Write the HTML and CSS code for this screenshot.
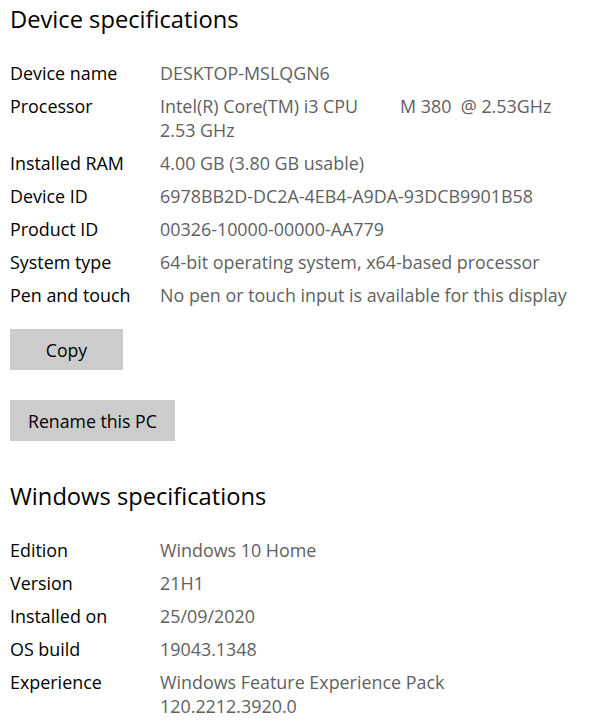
FILE: index.html
```html
<!DOCTYPE html>
<html lang="en">
<head>
    <meta charset="UTF-8">
    <title>About</title>
    <link rel="stylesheet" href="styles.css">
</head>
<body>
    <main class="about">
        <section class="block">
            <h2 class="title">Device specifications</h2>
            <div class="specs">
                <span class="label">Device name</span>
                <span class="value">DESKTOP-MSLQGN6</span>
                <span class="label">Processor</span>
                <span class="value">Intel(R) Core(TM) i3 CPU         M 380  @ 2.53GHz   2.53 GHz</span>
                <span class="label">Installed RAM</span>
                <span class="value">4.00 GB (3.80 GB usable)</span>
                <span class="label">Device ID</span>
                <span class="value">6978BB2D-DC2A-4EB4-A9DA-93DCB9901B58</span>
                <span class="label">Product ID</span>
                <span class="value">00326-10000-00000-AA779</span>
                <span class="label">System type</span>
                <span class="value">64-bit operating system, x64-based processor</span>
                <span class="label">Pen and touch</span>
                <span class="value">No pen or touch input is available for this display</span>
            </div>
            <div class="actions">
                <button class="btn">Copy</button>
                <button class="btn">Rename this PC</button>
            </div>
        </section>
        <section class="block">
            <h2 class="title">Windows specifications</h2>
            <div class="specs">
                <span class="label">Edition</span>
                <span class="value">Windows 10 Home</span>
                <span class="label">Version</span>
                <span class="value">21H1</span>
                <span class="label">Installed on</span>
                <span class="value">25/09/2020</span>
                <span class="label">OS build</span>
                <span class="value">19043.1348</span>
                <span class="label">Experience</span>
                <span class="value">Windows Feature Experience Pack 120.2212.3920.0</span>
            </div>
        </section>
    </main>
</body>
</html>
```
FILE: styles.css
```css
*{
    margin:0;
    padding:0;
    box-sizing:border-box;
}
body{
    background-color:#fff;
    font-family:"Open Sans","Noto Sans",sans-serif;
    color:#000;
}
.about{
    padding:3px 10px 0 10px;
}
.title{
    font-size:23.7px;
    font-weight:400;
    line-height:32px;
    margin-bottom:26px;
}
.specs{
    display:grid;
    grid-template-columns:150px 415px;
    row-gap:9px;
    font-size:17.9px;
    line-height:24px;
}
.value{
    color:#5f5f5f;
    white-space:pre-wrap;
}
.actions{
    display:flex;
    flex-direction:column;
    align-items:flex-start;
    gap:30px;
    margin-top:22px;
    margin-bottom:39px;
}
.btn{
    height:41px;
    min-width:113px;
    padding:0 18px;
    border:none;
    background-color:#ccc;
    color:#000;
    font-family:inherit;
    font-size:17.7px;
}
```
